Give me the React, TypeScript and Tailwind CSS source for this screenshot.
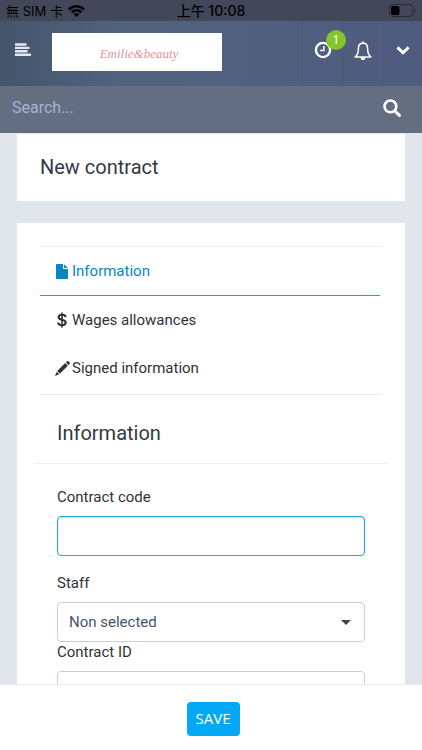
import { useState } from "react";
import type { ReactNode } from "react";
import clsx from "clsx";

const FileIcon = () => (
  <svg viewBox="0 0 12 15" className="h-[15px] w-3" fill="currentColor">
    <path d="M1 0h6v4.2c0 .5.3.8.8.8H12v9c0 .6-.4 1-1 1H1c-.6 0-1-.4-1-1V1c0-.6.4-1 1-1z" />
    <path d="M8 0.2L11.8 4H8z" />
  </svg>
);

const DollarIcon = () => (
  <svg viewBox="0 0 10 16" className="h-4 w-[10px]" fill="none" stroke="currentColor">
    <path d="M5 0.5v15" strokeWidth="1.6" />
    <path
      d="M8.6 5.1C8.4 3.6 7 2.8 5 2.8c-2 0-3.4.9-3.4 2.4C1.6 8.6 8.7 7 8.7 10.6c0 1.7-1.5 2.6-3.7 2.6-2.2 0-3.7-1-3.9-2.7"
      strokeWidth="2.1"
    />
  </svg>
);

const PencilIcon = () => (
  <svg viewBox="0 0 15 15" className="size-[15px]" fill="currentColor">
    <path d="M10.9 1.4l2.7 2.7 1-1c.5-.5.5-1.1 0-1.6L13.5.4c-.5-.5-1.1-.5-1.6 0z" />
    <path d="M10.2 2.1l2.7 2.7-8 8-2.7-2.7z" />
    <path d="M1.7 10.8l2.5 2.5L0 15z" />
  </svg>
);

const MenuIcon = () => (
  <svg viewBox="0 0 16 13" className="h-[13px] w-4" stroke="currentColor" strokeWidth="2.4">
    <path d="M0 1.5h11.5M0 4.9h14.5M0 8.3h12.5M0 11.7h16" />
  </svg>
);

const ClockIcon = () => (
  <svg viewBox="0 0 18 18" className="size-[18px]" fill="none" stroke="currentColor">
    <circle cx="9" cy="9" r="7.1" strokeWidth="2.4" />
    <path d="M9.8 5v4.6H6.2" strokeWidth="1.5" />
  </svg>
);

const BellIcon = () => (
  <svg viewBox="0 0 18 20" className="h-5 w-[18px]" fill="none" stroke="currentColor">
    <path
      d="M9 2.2c-3 0-4.6 2.2-4.6 5.2 0 3.8-.9 6.6-3.2 8.5h15.6c-2.3-1.9-3.2-4.7-3.2-8.5 0-3-1.6-5.2-4.6-5.2z"
      strokeWidth="1.5"
      strokeLinejoin="round"
    />
    <path d="M9 .5v2" strokeWidth="1.6" />
    <path d="M6.5 16.5h5c-.2 1.6-1.2 2.6-2.5 2.6s-2.3-1-2.5-2.6z" fill="currentColor" stroke="none" />
  </svg>
);

const ChevronIcon = () => (
  <svg viewBox="0 0 14 9" className="h-[9px] w-[14px]" fill="none" stroke="currentColor">
    <path d="M1.4 1.4L7 6.8l5.6-5.4" strokeWidth="2.9" />
  </svg>
);

const SearchIcon = () => (
  <svg viewBox="0 0 18 18" className="size-[18px]" fill="none" stroke="currentColor">
    <circle cx="7.4" cy="7.4" r="5.9" strokeWidth="2.6" />
    <path d="M11.7 11.7l4.7 4.7" strokeWidth="3" strokeLinecap="round" />
  </svg>
);

const WifiIcon = () => (
  <svg viewBox="0 0 17 12" className="h-3 w-[17px]" fill="currentColor">
    <path d="M0 3.7C4.9-1.2 12.1-1.2 17 3.7l-1.7 1.7c-3.900-3.900-9.700-3.900-13.600 0z" />
    <path d="M2.8 6.5c3.3-3.2 8.1-3.2 11.4 0l-1.7 1.7c-2.3-2.3-5.7-2.3-8 0z" />
    <path d="M8.5 12L5.6 9.2c1.7-1.5 4.1-1.5 5.8 0z" />
  </svg>
);

const BatteryIcon = () => (
  <svg viewBox="0 0 27 13" className="h-[13px] w-[27px]">
    <rect x="0.5" y="0.5" width="23.5" height="12" rx="3.5" fill="none" stroke="#292d3a" />
    <rect x="2" y="2" width="8.5" height="9" rx="2" fill="#000" />
    <path d="M25.3 4.5c1.6.5 1.6 3.5 0 4z" fill="#292d3a" />
  </svg>
);

const tabs: { id: string; label: string; icon: ReactNode }[] = [
  { id: "information", label: "Information", icon: <FileIcon /> },
  { id: "wages", label: "Wages allowances", icon: <DollarIcon /> },
  { id: "signed", label: "Signed information", icon: <PencilIcon /> },
];

const StatusBar = () => (
  <div className="grid h-[21px] grid-cols-3 items-center bg-[#43475a] px-[6px] font-['Inter','Noto_Sans_CJK_TC',sans-serif] text-sm leading-5 text-black">
    <div className="flex items-center gap-[5px]">
      <span className="text-[13px]">無 SIM 卡</span>
      <WifiIcon />
    </div>
    <span className="text-center font-medium">上午 10:08</span>
    <div className="flex justify-end">
      <BatteryIcon />
    </div>
  </div>
);

const Header = () => (
  <header>
    <div className="flex h-[65px] bg-linear-to-r from-[#44546b] via-[#51647f] via-30% to-[#4f5b7f] text-white">
      <div className="flex flex-1 items-start pl-[15px]">
        <button type="button" aria-label="Toggle menu" className="mt-[22px] text-[#e4e8ee]">
          <MenuIcon />
        </button>
        <a
          href="#"
          className="mt-3 ml-[21px] flex h-[38px] w-[170px] items-center justify-center bg-white pt-1 pl-1 font-['Liberation_Serif',serif] text-[13px] text-[#e29297] italic"
        >
          Emilie&amp;beauty
        </a>
      </div>
      <button
        type="button"
        aria-label="Timers"
        className="relative flex w-10 justify-center border-l border-[#4a5a73] pt-5"
      >
        <ClockIcon />
        <span className="absolute top-[9px] right-[-4px] z-10 flex size-5 items-center justify-center rounded-full bg-[#84c529] font-['Noto_Sans',sans-serif] text-xs">
          1
        </span>
      </button>
      <button
        type="button"
        aria-label="Notifications"
        className="flex w-10 justify-center border-l border-[#4a5a73] pt-5"
      >
        <BellIcon />
      </button>
      <button
        type="button"
        aria-label="More"
        className="flex w-10 justify-center border-l border-[#4a5a73] pt-[25px]"
      >
        <ChevronIcon />
      </button>
    </div>
    <form className="flex h-[47px] items-center bg-[#636f80] pr-[21px] pb-[3px] pl-3">
      <input
        type="text"
        aria-label="Search"
        placeholder="Search..."
        className="min-w-0 flex-1 bg-transparent text-base text-white outline-none placeholder:text-[#a3b4d0]"
      />
      <button type="button" aria-label="Submit search" className="text-white">
        <SearchIcon />
      </button>
    </form>
  </header>
);

const fieldClass =
  "h-10 w-full rounded-sm border bg-white px-[11px] text-[15px] text-[#475569] outline-none";

export default function App() {
  const [activeTab, setActiveTab] = useState("information");

  return (
    <div className="flex h-screen flex-col bg-[#e1e6ed] font-['Roboto',sans-serif] text-[15px] leading-5 text-[#2f3237]">
      <StatusBar />
      <Header />

      <main className="min-h-0 flex-1 overflow-y-auto px-[17px] pt-px [scrollbar-width:none]">
        <section className="mb-[22px] bg-white px-[23px] pt-[19px] pb-5">
          <h1 className="text-xl leading-7 text-[#323a45]">New contract</h1>
        </section>

        <section className="bg-white px-[17px] pt-[23px] pb-6">
          <nav className="mx-[6px] border-y border-[#eeeff1] pr-[2px] pb-[2px]">
            {tabs.map((tab) => (
              <button
                key={tab.id}
                type="button"
                onClick={() => setActiveTab(tab.id)}
                className={clsx(
                  "flex w-full items-center gap-[2px] pl-[14px]",
                  activeTab === tab.id
                    ? "h-[49px] border-b border-b-[#03a9f4] text-[#0a85c7]"
                    : "h-12",
                )}
              >
                <span className="flex w-4 justify-center">{tab.icon}</span>
                {tab.label}
              </button>
            ))}
          </nav>

          <h2 className="border-b border-[#eeeff1] px-[23px] pt-6 pb-4 text-xl leading-7 text-[#323a45]">
            Information
          </h2>

          <form className="px-[23px] pt-[23px]">
            <label htmlFor="contract-code" className="block pb-[9px]">
              Contract code
            </label>
            <input
              id="contract-code"
              type="text"
              className={clsx(fieldClass, "mb-[17px] border-[#2ba3d9] shadow-[inset_0_1px_2px_#cbd5e8]")}
            />
            <label htmlFor="staff" className="block pb-[9px]">
              Staff
            </label>
            <div className="relative">
              <select id="staff" className={clsx(fieldClass, "appearance-none border-[#c6cfdf]")}>
                <option>Non selected</option>
              </select>
              <svg
                viewBox="0 0 10 5"
                className="pointer-events-none absolute top-[18px] right-[14px] h-[5px] w-[10px]"
                fill="#3b4757"
              >
                <path d="M0 0h10L5 5z" />
              </svg>
            </div>
            <label htmlFor="contract-id" className="block pb-[9px]">
              Contract ID
            </label>
            <input id="contract-id" type="text" className={clsx(fieldClass, "border-[#c6cfdf]")} />
          </form>
        </section>
      </main>

      <footer className="flex h-[66px] items-center justify-center border-t border-[#e9ebef] bg-white pt-[2px] pl-1">
        <button
          type="button"
          className="h-[34px] rounded-sm bg-[#03a9f4] px-[9px] pb-[2px] font-['Open_Sans','Noto_Sans',sans-serif] text-[15px] text-white"
        >
          SAVE
        </button>
      </footer>
    </div>
  );
}
